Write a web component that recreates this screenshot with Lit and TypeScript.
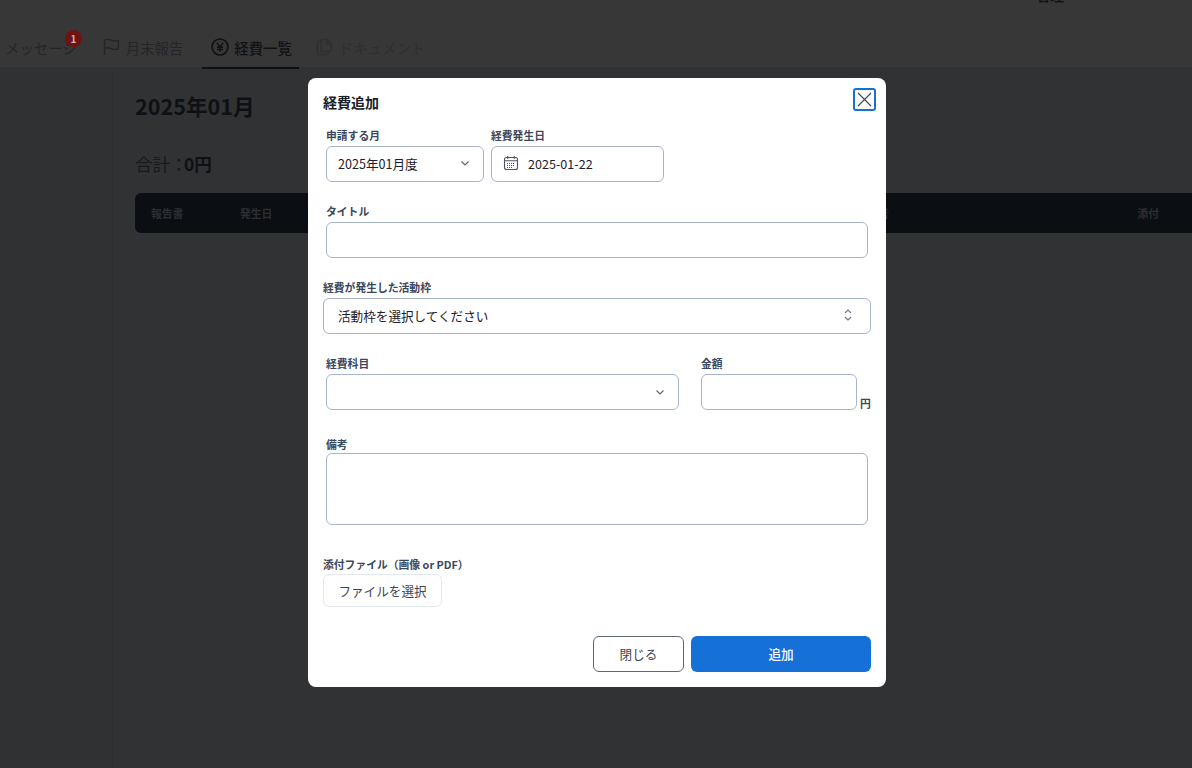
import { LitElement, html, css } from "lit";
import { customElement } from "lit/decorators.js";

const chevronDown = html`<svg class="chev" viewBox="0 0 12 12" width="12" height="12"><path d="M2.500 4.500 6 8l3.500-3.500" fill="none" stroke="#5b6675" stroke-width="1.100"/></svg>`;
const upDown = html`<svg class="updown" viewBox="0 0 10 14" width="10" height="14"><path d="M2 5 5 2l3 3M2 9l3 3 3-3" fill="none" stroke="#6b7584" stroke-width="1.100"/></svg>`;

@customElement("app-root")
export class AppRoot extends LitElement {
  static styles = css`
    :host {
      display: block;
      position: relative;
      width: 1192px;
      height: 768px;
      overflow: hidden;
      background: #313234;
      font-family: "Noto Sans CJK JP", "Noto Sans", sans-serif;
      color: #1a202c;
    }
    .strip {
      height: 3px;
      overflow: hidden;
      background: #373737;
      display: flex;
      align-items: flex-end;
      padding-left: 1036px;
      font-size: 14px;
      line-height: 16px;
      font-weight: 700;
      color: #141414;
    }
    .tabs {
      height: 65px;
      box-sizing: border-box;
      background: #373737;
      border-bottom: 1px solid #323334;
      display: flex;
      gap: 9px;
      padding-left: 5px;
      font-size: 14.4px;
      color: #22262a;
    }
    .tab {
      position: relative;
      display: flex;
      align-items: center;
      gap: 6px;
      height: 66px;
      padding: 22px 9px 0;
      box-sizing: border-box;
      white-space: nowrap;
    }
    .tab.first { padding: 22px 8px 0 0; }
    .tab.flag { padding-right: 10px; }
    .tab.active {
      color: #0f1215;
      font-weight: 500;
      padding: 24px 7px 0 9px;
      border-bottom: 2px solid #0d1117;
      gap: 5px;
    }
    .tab.doc { padding-left: 8px; color: #2c2e30; }
    .badge {
      position: absolute;
      left: 60px;
      top: 27px;
      width: 17px;
      height: 17px;
      border-radius: 50%;
      background: #6e1212;
      color: #c9b4b4;
      font-size: 10px;
      font-weight: 700;
      line-height: 17px;
      text-align: center;
    }
    .body { display: flex; height: 700px; }
    .side { width: 113px; border-right: 1px solid #2e2f31; background: #303133; box-sizing: border-box; }
    .main { flex: 1; min-width: 0; padding: 23px 0 0 22px; }
    .heading { font-size: 21.6px; line-height: 30px; font-weight: 700; color: #0e1114; }
    .sum { margin-top: 28px; font-size: 17.5px; line-height: 30px; color: #17191c; }
    .colon { letter-spacing: -3.500px; }
    .sum b { font-weight: 700; color: #0e1114; }
    .thead {
      margin-top: 14px;
      height: 40px;
      background: #0b0e12;
      border-radius: 6px 0 0 6px;
      display: flex;
      align-items: center;
      padding-left: 16px;
      font-size: 10.8px;
      font-weight: 700;
      color: #2c2f33;
    }
    .c1 { width: 89px; }
    .c2 { width: 89px; }
    .cm { width: 560px; text-align: right; }
    .c3 { margin-left: auto; padding-right: 33px; }
    .modal {
      position: absolute;
      left: 308px;
      top: 78px;
      width: 578px;
      height: 609px;
      box-sizing: border-box;
      background: #fff;
      border-radius: 8px;
      padding: 10px 10px 15px 15px;
    }
    .mhead { display: flex; justify-content: space-between; align-items: flex-start; }
    .mtitle { margin-top: 4px; font-size: 14px; line-height: 20px; font-weight: 700; color: #1a202c; }
    .close {
      width: 23px;
      height: 23px;
      box-sizing: border-box;
      border: 2px solid #1570d8;
      border-radius: 3px;
      background: #fff;
      padding: 0;
      display: flex;
      align-items: center;
      justify-content: center;
    }
    .form { width: 548px; }
    .row { display: flex; padding: 0 3px; }
    .full { padding: 0; }
    label {
      display: block;
      font-size: 10.8px;
      line-height: 16px;
      font-weight: 600;
      color: #3a475c;
      margin-bottom: 3px;
    }
    .ctl {
      display: flex;
      align-items: center;
      box-sizing: border-box;
      height: 36px;
      border: 1px solid #a6b5cc;
      border-radius: 6px;
      background: #fff;
      font: inherit;
      font-size: 12.6px;
      color: #1a202c;
      padding: 0 11px 2px;
      outline: none;
    }
    .r1 { margin-top: 15px; gap: 7px; }
    .r1 .month { width: 158px; justify-content: space-between; padding-right: 12px; }
    .r1 .date { width: 173px; gap: 9px; }
    .r2 { margin-top: 21px; }
    .r2 .f, .r5 .f { width: 542px; }
    .r3 { margin-top: 21px; }
    .r3 .f { width: 548px; }
    .r3 .ctl { padding: 0 17px 2px 14px; justify-content: space-between; }
    .wide { width: 100%; display: block; }
    .r4 { margin-top: 21px; }
    .r4 .subject { width: 353px; flex: none; margin-right: 22px; }
    .r4 .subject .ctl { justify-content: flex-end; padding: 0 12px 0 0; }
    .r4 .amount { width: 156px; flex: none; }
    .yen {
      flex: none;
      align-self: flex-end;
      margin-left: 3px;
      font-size: 10.8px;
      font-weight: 600;
      line-height: 14px;
      color: #3a475c;
    }
    .r5 { margin-top: 26px; }
    .r5 label { margin-bottom: 1px; }
    .r5 textarea { height: 72px; width: 100%; padding: 8px 11px; resize: none; display: block; }
    .r6 { margin-top: 31px; display: block; padding: 0; }
    .r6 label { margin-bottom: 2px; }
    .filebtn {
      width: 119px;
      height: 33px;
      box-sizing: border-box;
      border: 1px solid #e2e8f0;
      border-radius: 6px;
      background: #fff;
      font: inherit;
      font-size: 12.6px;
      color: #3c4656;
      padding: 0 0 1px;
    }
    .foot { display: flex; justify-content: flex-end; gap: 7px; margin-top: 29px; width: 548px; }
    .btn {
      height: 36px;
      box-sizing: border-box;
      border-radius: 6px;
      font: inherit;
      font-size: 12.6px;
      padding: 0 0 2px;
    }
    .btn.ghost { width: 91px; background: #fff; border: 1px solid #5f6774; color: #3c4656; }
    .btn.primary { width: 180px; background: #1570d8; border: none; color: #fff; font-weight: 500; }
  `;

  render() {
    return html`
      <div class="strip"><span>管理</span></div>
      <nav class="tabs">
        <div class="tab first">メッセージ<span class="badge">1</span></div>
        <div class="tab flag">
          <svg width="17" height="18" viewBox="0 0 17 18" fill="none" stroke="#22262a" stroke-width="1.400">
            <path d="M1.500 17V2.200C3.500 .9 5.600 1 8 2.200s4.600 1.400 7.400.2v8.400c-2.800 1.200-5 1-7.400-.2S3.500 9.400 1.500 10.600" stroke-linejoin="round"/>
          </svg>
          月末報告
        </div>
        <div class="tab active">
          <svg width="18" height="18" viewBox="0 0 18 18" fill="none" stroke="#0f1215">
            <circle cx="9" cy="9" r="8" stroke-width="1.700"/>
            <path d="M5.800 4.600 9 9l3.200-4.400M9 9v4.800M6 9.300h6M6 11.400h6" stroke-width="1.500"/>
          </svg>
          経費一覧
        </div>
        <div class="tab doc">
          <svg width="17" height="18" viewBox="0 0 17 18" fill="none" stroke="#2c2e30" stroke-width="1.400">
            <path d="M5 3.500H3a1.500 1.500 0 0 0-1.500 1.500v10A1.500 1.500 0 0 0 3 16.500h7.500a1.500 1.500 0 0 0 1.500-1.500v-1.500"/>
            <path d="M5 3A1.500 1.500 0 0 1 6.500 1.500H11l4.500 4.500v6A1.500 1.500 0 0 1 14 13.500H6.500A1.500 1.500 0 0 1 5 12zM11 1.500V6h4.500"/>
          </svg>
          ドキュメント
        </div>
      </nav>
      <div class="body">
        <div class="side"></div>
        <main class="main">
          <div class="heading">2025年01月</div>
          <div class="sum">合計<span class="colon">：</span><b>0円</b></div>
          <div class="thead">
            <span class="c1">報告書</span>
            <span class="c2">発生日</span>
            <span class="cm">対象者</span>
            <span class="c3">添付</span>
          </div>
        </main>
      </div>

      <section class="modal">
        <div class="mhead">
          <div class="mtitle">経費追加</div>
          <button class="close" aria-label="閉じる">
            <svg width="15" height="15" viewBox="0 0 15 15"><path d="M1 1l13 13M14 1 1 14" stroke="#3f4a5c" stroke-width="1.200" fill="none"/></svg>
          </button>
        </div>
        <div class="form">
          <div class="row r1">
            <div>
              <label>申請する月</label>
              <div class="ctl month">2025年01月度 ${chevronDown}</div>
            </div>
            <div>
              <label>経費発生日</label>
              <div class="ctl date">
                <svg width="16" height="16" viewBox="0 0 16 16" fill="none" stroke="#4a5568" stroke-width="1.100">
                  <rect x="1.500" y="2.500" width="13" height="12" rx="2"/>
                  <path d="M1.500 5.800h13M4.800 1v3M11.200 1v3"/>
                  <path d="M4 8.500h8M4 10.500h8M4 12.500h5" stroke-dasharray="1 1"/>
                </svg>
                2025-01-22
              </div>
            </div>
          </div>
          <div class="row r2">
            <div class="f">
              <label>タイトル</label>
              <input class="ctl wide" type="text" />
            </div>
          </div>
          <div class="row r3 full">
            <div class="f">
              <label>経費が発生した活動枠</label>
              <div class="ctl">活動枠を選択してください ${upDown}</div>
            </div>
          </div>
          <div class="row r4">
            <div class="subject">
              <label>経費科目</label>
              <div class="ctl">${chevronDown}</div>
            </div>
            <div class="amount">
              <label>金額</label>
              <input class="ctl wide" type="text" />
            </div>
            <span class="yen">円</span>
          </div>
          <div class="row r5">
            <div class="f">
              <label>備考</label>
              <textarea class="ctl"></textarea>
            </div>
          </div>
          <div class="row r6">
            <label>添付ファイル（画像 or PDF）</label>
            <button class="filebtn">ファイルを選択</button>
          </div>
        </div>
        <div class="foot">
          <button class="btn ghost">閉じる</button>
          <button class="btn primary">追加</button>
        </div>
      </section>
    `;
  }
}
